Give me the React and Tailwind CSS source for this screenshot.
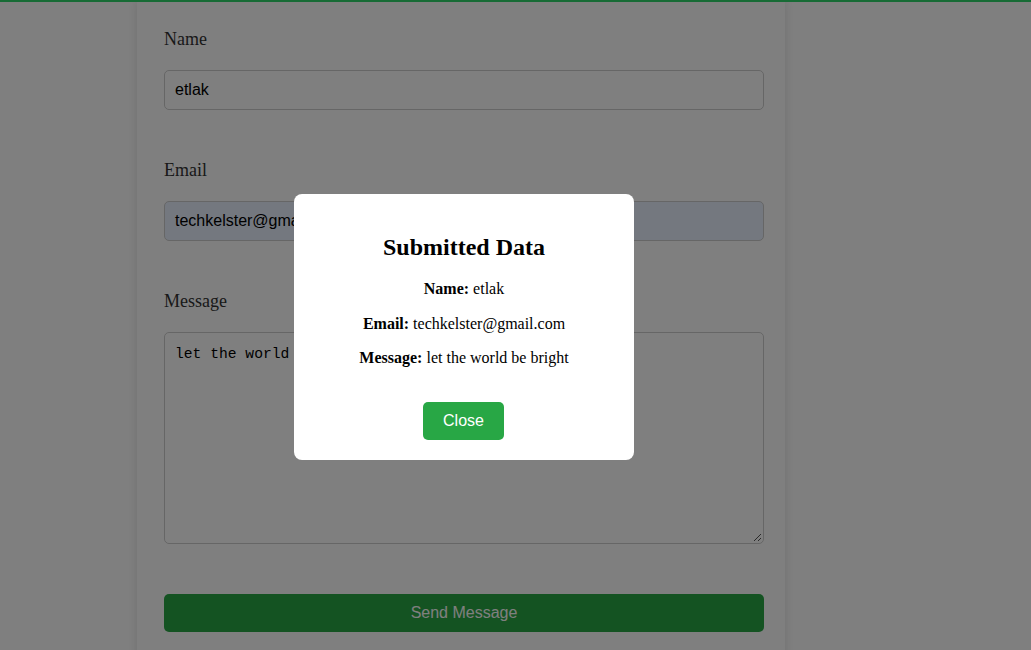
export default function App() {
  return (
    <div className="relative w-full bg-white overflow-hidden" style={{ height: 650 }}>
      <div className="ml-[137px] w-[648px] bg-white shadow-[0_0_10px_rgba(0,0,0,0.12)] pl-[27px] pr-[21px] pt-[29px] pb-[40px] font-['Liberation_Serif',serif]">
        <div className="text-[18px] leading-[20px] text-[#333]">Name</div>
        <div className="mt-[21px] h-[40px] w-full rounded-[5px] border border-[#ccc] bg-white px-[10px] flex items-center font-['Liberation_Sans',Arial,sans-serif] text-[16px] text-black">
          etlak
        </div>
        <div className="mt-[50px] text-[18px] leading-[20px] text-[#333]">Email</div>
        <div className="mt-[21px] h-[40px] w-full rounded-[5px] border border-[#ccc] bg-[#e8f0fe] px-[10px] flex items-center font-['Liberation_Sans',Arial,sans-serif] text-[16px] text-black">
          techkelster@gmail.com
        </div>
        <div className="mt-[50px] text-[18px] leading-[20px] text-[#333]">Message</div>
        <div className="relative mt-[21px] h-[212px] w-full rounded-[5px] border border-[#ccc] bg-white px-[10px] pt-[12px] font-['Liberation_Mono',monospace] text-[14.67px] leading-[18px] text-black">
          let the world be bright
          <svg className="absolute right-[1px] bottom-[1px]" width="9" height="9" viewBox="0 0 9 9">
            <path d="M8 1 L1 8 M8 5 L5 8" stroke="#555" strokeWidth="1" />
          </svg>
        </div>
        <div className="mt-[50px] h-[38px] w-full rounded-[5px] bg-[#28a745] flex items-center justify-center font-['Liberation_Sans',Arial,sans-serif] text-[16px] text-white">
          Send Message
        </div>
      </div>

      <div className="fixed inset-0 bg-black/50 flex items-start justify-start">
        <div className="mt-[194px] ml-[294px] w-[340px] rounded-[8px] bg-white px-[20px] pt-[20px] pb-[20px] text-center font-['Liberation_Serif',serif] text-black">
          <div className="mt-[19px] text-[24px] leading-[28px] font-bold">Submitted Data</div>
          <div className="mt-[19px] text-[16px] leading-[18px]">
            <b>Name:</b> etlak
          </div>
          <div className="mt-[16.5px] text-[16px] leading-[18px]">
            <b>Email:</b> techkelster@gmail.com
          </div>
          <div className="mt-[16.5px] text-[16px] leading-[18px]">
            <b>Message:</b> let the world be bright
          </div>
          <div className="mt-[35px] flex justify-center">
            <div className="mr-[1px] h-[38px] w-[81px] rounded-[5px] bg-[#28a745] flex items-center justify-center font-['Liberation_Sans',Arial,sans-serif] text-[16px] text-white">
              Close
            </div>
          </div>
        </div>
      </div>
      <div className="fixed left-0 right-0 top-0 h-[2px] bg-[#176b35]" />
    </div>
  );
}
